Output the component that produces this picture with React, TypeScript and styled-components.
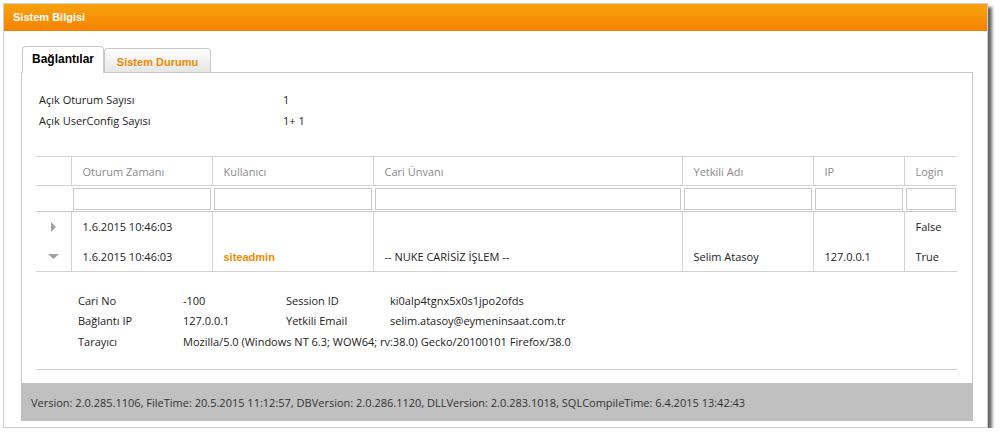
import styled, { createGlobalStyle } from "styled-components";

const GlobalStyle = createGlobalStyle`
  body {
    margin: 0;
    background: #ffffff;
    font-family: "Open Sans", "Noto Sans", sans-serif;
    font-size: 11px;
    color: #222222;
  }
`;

const columns = [
  { title: "", width: 35 },
  { title: "Oturum Zamanı", width: 141 },
  { title: "Kullanıcı", width: 161 },
  { title: "Cari Ünvanı", width: 309 },
  { title: "Yetkili Adı", width: 131 },
  { title: "IP", width: 91 },
  { title: "Login", width: 53 },
];

const rows = [
  {
    expanded: false,
    time: "1.6.2015 10:46:03",
    user: "",
    cari: "",
    yetkili: "",
    ip: "",
    login: "False",
  },
  {
    expanded: true,
    time: "1.6.2015 10:46:03",
    user: "siteadmin",
    cari: "-- NUKE CARİSİZ İŞLEM --",
    yetkili: "Selim Atasoy",
    ip: "127.0.0.1",
    login: "True",
  },
];

const Arrow = ({ down }: { down: boolean }) =>
  down ? (
    <svg width="11" height="5" viewBox="0 0 11 5">
      <polygon points="0,0 11,0 5.5,5" fill="#a0a0a0" />
    </svg>
  ) : (
    <svg width="5" height="10" viewBox="0 0 5 10">
      <polygon points="0,0 5,5 0,10" fill="#a0a0a0" />
    </svg>
  );

export default function App() {
  return (
    <>
      <GlobalStyle />
      <Window>
        <TitleBar>Sistem Bilgisi</TitleBar>
        <Body>
          <Tabs>
            <Tab $active>Bağlantılar</Tab>
            <Tab>Sistem Durumu</Tab>
          </Tabs>
          <Panel>
            <Content>
              <Info>
                <span>Açık Oturum Sayısı</span>
                <span>1</span>
                <span>Açık UserConfig Sayısı</span>
                <span>1+ 1</span>
              </Info>

              <Grid>
                <colgroup>
                  {columns.map((c, i) => (
                    <col key={i} style={{ width: c.width }} />
                  ))}
                </colgroup>
                <thead>
                  <HeadRow>
                    {columns.map((c, i) => (
                      <HeadCell key={i} $first={i === 0}>
                        {c.title}
                      </HeadCell>
                    ))}
                  </HeadRow>
                  <FilterRow>
                    {columns.map((c, i) => (
                      <FilterCell key={i}>{i > 0 && <FilterBox />}</FilterCell>
                    ))}
                  </FilterRow>
                </thead>
                <tbody>
                  {rows.map((r, i) => (
                    <DataRow key={i} $last={i === rows.length - 1}>
                      <ExpandCell>
                        <Arrow down={r.expanded} />
                      </ExpandCell>
                      <Cell>{r.time}</Cell>
                      <Cell>{r.user && <UserName>{r.user}</UserName>}</Cell>
                      <Cell>{r.cari}</Cell>
                      <Cell>{r.yetkili}</Cell>
                      <Cell>{r.ip}</Cell>
                      <Cell>{r.login}</Cell>
                    </DataRow>
                  ))}
                </tbody>
              </Grid>

              <Detail>
                <span>Cari No</span>
                <span>-100</span>
                <span>Session ID</span>
                <span>ki0alp4tgnx5x0s1jpo2ofds</span>
                <span>Bağlantı IP</span>
                <span>127.0.0.1</span>
                <span>Yetkili Email</span>
                <span>selim.atasoy@eymeninsaat.com.tr</span>
                <span>Tarayıcı</span>
                <Wide>
                  Mozilla/5.0 (Windows NT 6.3; WOW64; rv:38.0) Gecko/20100101
                  Firefox/38.0
                </Wide>
              </Detail>

              <Separator />
            </Content>
            <Footer>
              Version: 2.0.285.1106, FileTime: 20.5.2015 11:12:57, DBVersion:
              2.0.286.1120, DLLVersion: 2.0.283.1018, SQLCompileTime: 6.4.2015
              13:42:43
            </Footer>
          </Panel>
        </Body>
      </Window>
    </>
  );
}

const Window = styled.div`
  margin: 3px 0 0 3px;
  width: 985px;
  height: 425px;
  box-sizing: border-box;
  border: 1px solid #cdcdcd;
  background: #ffffff;
  box-shadow: 4px 4px 3px rgba(0, 0, 0, 0.6);
  display: flex;
  flex-direction: column;
`;

const TitleBar = styled.div`
  height: 27px;
  line-height: 26px;
  padding-left: 9px;
  background: linear-gradient(#f7a30f, #f48200);
  color: #ffffff;
  font-family: "Liberation Sans", Arial, sans-serif;
  font-weight: bold;
  font-size: 11px;
`;

const Body = styled.div`
  padding: 15px 14px 0 17px;
  display: flex;
  flex-direction: column;
`;

const Tabs = styled.div`
  display: flex;
  align-items: flex-end;
  height: 26px;
  margin-left: 1px;
`;

const Tab = styled.div<{ $active?: boolean }>`
  box-sizing: border-box;
  border: 1px solid #c8c8c8;
  border-radius: 4px 4px 0 0;
  font-family: "Liberation Sans", Arial, sans-serif;
  font-weight: bold;
  display: flex;
  align-items: center;
  justify-content: center;
  ${(p) =>
    p.$active
      ? `
    width: 82px;
    height: 27px;
    margin-bottom: -1px;
    border-bottom: none;
    background: #ffffff;
    color: #000000;
    font-size: 12px;
    padding-bottom: 2px;
    position: relative;
    z-index: 1;
  `
      : `
    width: 107px;
    height: 24px;
    border-bottom: none;
    background: linear-gradient(#ffffff, #e6e6e6);
    color: #f08a00;
    font-size: 11px;
    padding-top: 2px;
  `}
`;

const Panel = styled.div`
  border: 1px solid #c8c8c8;
  border-bottom: none;
  height: 349px;
  box-sizing: border-box;
  display: flex;
  flex-direction: column;
`;

const Content = styled.div`
  flex: 1;
  padding: 16px 14px 0 14px;
`;

const Info = styled.div`
  display: grid;
  grid-template-columns: 244px auto;
  grid-auto-rows: 21px;
  align-items: center;
  margin-left: 3px;
`;

const Grid = styled.table`
  margin-top: 25px;
  width: 921px;
  table-layout: fixed;
  border-collapse: collapse;
  border-top: 1px solid #d2d2d2;
`;

const HeadRow = styled.tr`
  height: 29px;
  border-bottom: 1px solid #d2d2d2;
`;

const HeadCell = styled.th<{ $first?: boolean }>`
  padding: 0 0 0 11px;
  text-align: left;
  font-weight: normal;
  color: #8a8a8a;
  border-left: ${(p) => (p.$first ? "none" : "1px solid #d2d2d2")};
  white-space: nowrap;
`;

const FilterRow = styled.tr`
  height: 26px;
  border-bottom: 1px solid #c8c8c8;
`;

const FilterCell = styled.td`
  padding: 0 1px 0 2px;
`;

const FilterBox = styled.div`
  height: 22px;
  box-sizing: border-box;
  border: 1px solid #cacaca;
  background: #ffffff;
`;

const DataRow = styled.tr<{ $last?: boolean }>`
  height: 30px;
  border-bottom: ${(p) => (p.$last ? "1px solid #d2d2d2" : "none")};
`;

const Cell = styled.td`
  padding: 0 0 0 11px;
  border-left: 1px solid #d2d2d2;
  white-space: nowrap;
  color: #222222;
`;

const ExpandCell = styled.td`
  padding: 0;
  text-align: center;
  line-height: 0;
`;

const UserName = styled.span`
  color: #f28a00;
  font-family: "Liberation Sans", Arial, sans-serif;
  font-weight: bold;
  font-size: 11px;
`;

const Detail = styled.div`
  display: grid;
  grid-template-columns: 105px 103px 104px auto;
  grid-auto-rows: 20.5px;
  align-items: center;
  margin: 18px 0 0 42px;
`;

const Wide = styled.span`
  grid-column: 2 / span 3;
`;

const Separator = styled.div`
  margin-top: 17px;
  width: 921px;
  border-top: 1px solid #d0d0d0;
`;

const Footer = styled.div`
  height: 38px;
  margin: 0 -1px;
  padding-left: 10px;
  display: flex;
  align-items: center;
  background: #c0c0c0;
  color: #333333;
`;
